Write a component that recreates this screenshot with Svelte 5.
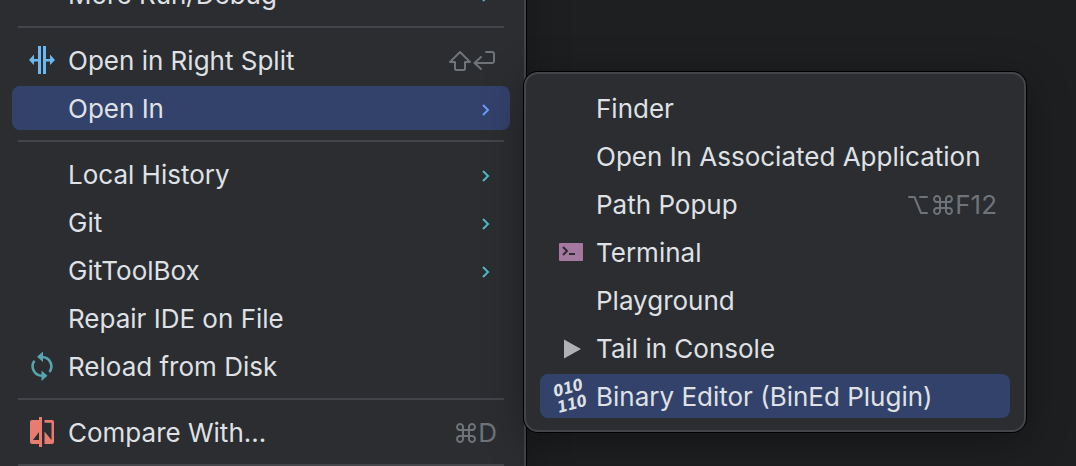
<script>
  const menu = [
    { label: 'More Run/Debug', arrow: true },
    { separator: true },
    { label: 'Open in Right Split', icon: 'split', keys: ['shift', 'enter'] },
    { label: 'Open In', arrow: true, selected: true },
    { separator: true },
    { label: 'Local History', arrow: true },
    { label: 'Git', arrow: true },
    { label: 'GitToolBox', arrow: true },
    { label: 'Repair IDE on File' },
    { label: 'Reload from Disk', icon: 'reload' },
    { separator: true },
    { label: 'Compare With...', icon: 'compare', keys: ['command', 'D'] },
    { separator: true },
  ];

  const submenu = [
    { label: 'Finder' },
    { label: 'Open In Associated Application' },
    { label: 'Path Popup', keys: ['option', 'command', 'F12'] },
    { label: 'Terminal', icon: 'terminal' },
    { label: 'Playground' },
    { label: 'Tail in Console', icon: 'play' },
    { label: 'Binary Editor (BinEd Plugin)', icon: 'binary', selected: true },
  ];
</script>

{#snippet icon(name)}
  <svg class="icon" viewBox="0 0 32 32" aria-hidden="true">
    {#if name === 'split'}
      <g fill="#6cb8ee">
        <path d="M12 2h3v28h-3zM17 2h3v28h-3z" />
        <path d="M3 16l5-5.500V15h4v2.500H8V21zM29 16l-5-5.500V15h-4v2.500h4V21z" />
      </g>
    {:else if name === 'reload'}
      <g fill="none" stroke="#57a5b0" stroke-width="2.600">
        <path d="M16 7A9.400 9.400 0 0 1 23.500 22" />
        <path d="M16 25.700A9.400 9.400 0 0 1 8.500 10.700" />
      </g>
      <path fill="#57a5b0" d="M11 6.800l6-5.200v10.400zM21.500 25.800l-6-5.200v10.400z" />
    {:else if name === 'compare'}
      <path
        fill="#e77c70"
        fill-rule="evenodd"
        d="M13 1h3v30h-3v-3H6a2 2 0 0 1-2-2V6a2 2 0 0 1 2-2h7zM7 24h6v-8z"
      />
      <path
        fill="#e77c70"
        fill-rule="evenodd"
        d="M18.500 4H26a2 2 0 0 1 2 2v20a2 2 0 0 1-2 2h-7.500V15.500l7 8.500V6.700h-7z"
      />
    {:else if name === 'terminal'}
      <rect x="5" y="7" width="24" height="18" rx="1" fill="#a5789f" />
      <path d="M9 11l4 4-4 4M15 18h6" fill="none" stroke="#2b2d30" stroke-width="2" />
    {:else if name === 'play'}
      <path fill="#afb1b3" d="M10 7.500l17 9.500-17 9.500z" />
    {:else if name === 'binary'}
      <g class="bits">
        <text transform="translate(1 17) rotate(-15)">010</text>
        <text transform="translate(5 33) rotate(-15)">110</text>
      </g>
    {/if}
  </svg>
{/snippet}

{#snippet key(name)}
  {#if name === 'shift'}
    <svg class="key" viewBox="0 0 24 24" role="img" aria-label="Shift">
      <path d="M11 3L1 13h5v7q0 1 1 1h8q1 0 1-1v-7h5z" />
    </svg>
  {:else if name === 'enter'}
    <svg class="key" viewBox="0 0 24 24" role="img" aria-label="Enter">
      <path d="M13 3h6q2 0 2 2v7q0 2-2 2H2M8 8l-6.500 6L8 20" />
    </svg>
  {:else if name === 'command'}
    <svg class="key" viewBox="0 0 24 24" role="img" aria-label="Command">
      <path
        d="M9 9H6.500A3 3 0 1 1 9 6.500v11A3 3 0 1 1 6.500 15h11A3 3 0 1 1 15 17.500v-11A3 3 0 1 1 17.500 9z"
      />
    </svg>
  {:else if name === 'option'}
    <svg class="key" viewBox="0 0 24 24" role="img" aria-label="Option">
      <path d="M2 4h5.500L14 20h6M13 4h7" />
    </svg>
  {:else}
    <span>{name}</span>
  {/if}
{/snippet}

{#snippet list(items)}
  {#each items as item}
    {#if item.separator}
      <li class="separator" role="separator"></li>
    {:else}
      <li role="none">
        <button class="item" class:selected={item.selected} role="menuitem" type="button">
          {@render icon(item.icon)}
          <span class="label">{item.label}</span>
          {#if item.keys}
            <span class="keys">
              {#each item.keys as name}{@render key(name)}{/each}
            </span>
          {/if}
          {#if item.arrow}
            <svg class="arrow" viewBox="0 0 8 14" aria-hidden="true">
              <path d="M1 2l5 5-5 5" />
            </svg>
          {/if}
        </button>
      </li>
    {/if}
  {/each}
{/snippet}

<main>
  <ul class="menu" role="menu" aria-label="Context menu">
    {@render list(menu)}
  </ul>
  <ul class="submenu" role="menu" aria-label="Open In">
    {@render list(submenu)}
  </ul>
</main>

<style>
  :global(body) {
    margin: 0;
    background: #1e1f21;
  }

  main {
    display: grid;
    grid-template-columns: 526fr 550fr;
    height: 100vh;
    overflow: hidden;
    background: #1e1f21;
    color: #dfe1e5;
    font: 26px/32px Inter, 'Liberation Sans', sans-serif;
  }

  ul {
    margin: 0;
    list-style: none;
    background: #2b2d30;
    box-sizing: border-box;
  }

  /* The menu is scrolled so that its first row is partly out of view. */
  .menu {
    margin-top: -30px;
    padding: 0 14px 0 12px;
    border-right: 2px solid #43454a;
    box-shadow: 0 0 0 1px #000, 0 0 40px rgb(0 0 0 / 30%);
  }

  .submenu {
    position: relative;
    align-self: start;
    margin: 72px 50px 0 -2px;
    padding: 10px 14px;
    border: 2px solid #43454a;
    border-radius: 14px;
    box-shadow: 0 0 0 1px #000, 0 8px 40px rgb(0 0 0 / 35%);
  }

  .item {
    display: flex;
    align-items: center;
    width: 100%;
    height: 44px;
    margin: 2px 0;
    padding: 0 13px 0 14px;
    border: 0;
    border-radius: 8px;
    background: none;
    color: inherit;
    font: inherit;
    text-align: left;
    white-space: nowrap;
  }

  li {
    display: flow-root;
  }

  .selected {
    background: #33426b;
  }

  .icon {
    flex: none;
    width: 32px;
    height: 32px;
    margin-right: 10px;
    overflow: visible;
  }

  .label {
    flex: 1;
    padding-top: 2px;
  }

  .keys {
    display: flex;
    align-items: center;
    padding-top: 2px;
    color: #6f737a;
  }

  .key {
    width: 24px;
    height: 24px;
    fill: none;
    stroke: currentColor;
    stroke-width: 2;
    stroke-linejoin: round;
    stroke-linecap: round;
    overflow: visible;
  }

  .arrow {
    width: 8px;
    height: 14px;
    margin-right: 7px;
    padding-top: 4px;
    fill: none;
    stroke: #4fb8c4;
    stroke-width: 2;
  }

  .selected .arrow {
    stroke: #6b9bfa;
  }

  .separator {
    height: 2px;
    margin: 8px 6px;
    background: #43454a;
  }

  .bits {
    fill: #dfe1e5;
    font: italic bold 16px 'DejaVu Sans Condensed', 'DejaVu Sans', sans-serif;
  }
</style>
